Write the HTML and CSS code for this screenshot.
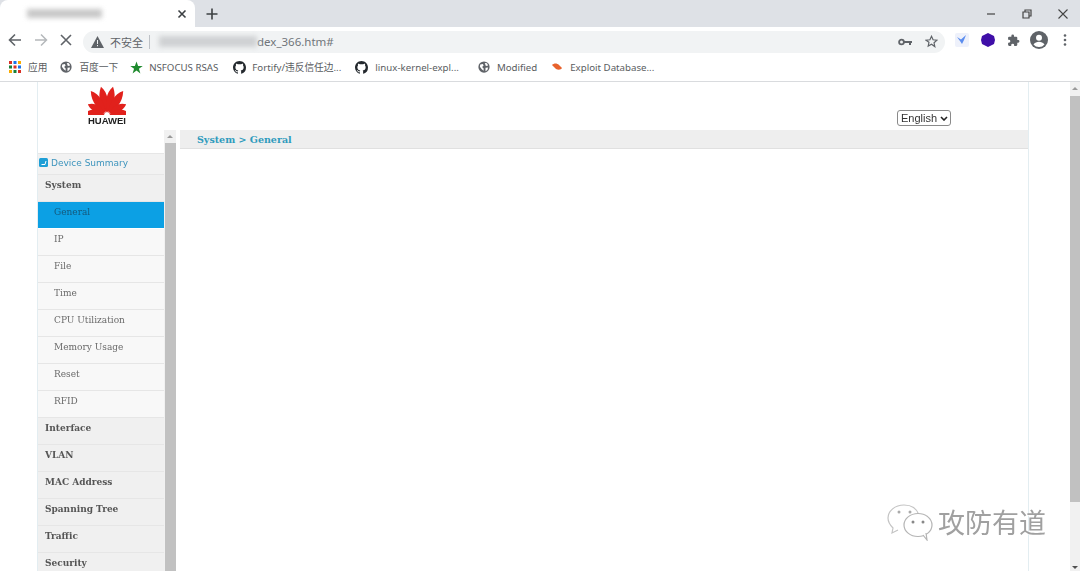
FILE: index.html
```html
<!DOCTYPE html>
<html lang="zh">
<head>
    <meta charset="UTF-8">
    <title>Huawei - System General</title>
    <link rel="stylesheet" href="styles.css">
</head>
<body>
<svg class="defs" width="0" height="0">
    <defs>
        <path id="gh" d="M8 0C3.58 0 0 3.58 0 8c0 3.54 2.29 6.53 5.47 7.59.4.07.55-.15.55-.38 0-.19-.01-.82-.01-1.49-2.01.37-2.53-.49-2.69-.94-.09-.23-.48-.94-.82-1.13-.28-.15-.68-.52-.01-.53.63-.01 1.08.58 1.23.82.72 1.21 1.87.87 2.33.66.07-.52.28-.87.51-1.07-1.78-.2-3.64-.89-3.64-3.95 0-.87.31-1.59.82-2.15-.08-.2-.36-1.02.08-2.12 0 0 .67-.21 2.2.82.64-.18 1.32-.27 2-.27.68 0 1.36.09 2 .27 1.53-1.04 2.2-.82 2.2-.82.44 1.1.16 1.92.08 2.12.51.56.82 1.27.82 2.15 0 3.07-1.87 3.75-3.65 3.95.29.25.54.73.54 1.48 0 1.07-.01 1.93-.01 2.2 0 .21.15.46.55.38A8.013 8.013 0 0016 8c0-4.42-3.58-8-8-8z"/>
        <g id="globe">
            <circle cx="8" cy="8" r="7.5" fill="#5f6368"/>
            <path d="M3 4.5l3.5-.5 1 2-2 2 2 2v3L5 11 2.5 7.5zM9 2.5l3 .5 1.5 3-3 .5zM10 9l3.5-.5-1 3.5-2.5 1.5z" fill="#fff"/>
        </g>
    </defs>
</svg>

<div class="browser">
    <!-- tab strip -->
    <div class="tabstrip">
        <div class="tab">
            <span class="blur-title"></span>
            <svg class="tab-close" width="10" height="10" viewBox="0 0 10 10"><path d="M1.5 1.5l7 7M8.5 1.5l-7 7" stroke="#3c4043" stroke-width="1.6"/></svg>
        </div>
        <svg class="new-tab" width="12" height="12" viewBox="0 0 12 12"><path d="M6 .5v11M.5 6h11" stroke="#3c4043" stroke-width="1.6"/></svg>
        <div class="win-controls">
            <svg width="12" height="12" viewBox="0 0 12 12"><path d="M2 6h8" stroke="#444" stroke-width="1.2"/></svg>
            <svg width="12" height="12" viewBox="0 0 12 12"><path d="M2 4h6v6H2zM4 4V2h6v6H8" fill="none" stroke="#444" stroke-width="1.2"/></svg>
            <svg width="12" height="12" viewBox="0 0 12 12"><path d="M1.5 1.5l9 9M10.5 1.5l-9 9" stroke="#444" stroke-width="1.1"/></svg>
        </div>
    </div>

    <!-- toolbar -->
    <div class="toolbar">
        <div class="nav-btns">
            <svg width="14" height="14" viewBox="0 0 14 14"><path d="M13 7H2M7 1.5L1.5 7 7 12.5" fill="none" stroke="#5f6368" stroke-width="1.6"/></svg>
            <svg width="14" height="14" viewBox="0 0 14 14"><path d="M1 7h11M7 1.5L12.5 7 7 12.5" fill="none" stroke="#b5b8bb" stroke-width="1.5"/></svg>
            <svg width="12" height="12" viewBox="0 0 12 12"><path d="M1 1l10 10M11 1L1 11" stroke="#5f6368" stroke-width="1.6"/></svg>
        </div>
        <div class="omnibox">
            <svg class="warn" width="13" height="12" viewBox="0 0 13 12"><path d="M6.5 0L13 12H0z" fill="#5f6368"/><path d="M6 4h1v4H6zM6 9h1v1.300H6z" fill="#f1f3f4"/></svg>
            <span class="not-secure">不安全</span>
            <span class="omni-sep"></span>
            <span class="blur-url"></span>
            <span class="url">dex_366.htm#</span>
            <svg class="key" width="14" height="8" viewBox="0 0 14 8"><circle cx="3.500" cy="4" r="2.400" fill="none" stroke="#5f6368" stroke-width="1.800"/><path d="M6 3h8v2h-1v2h-2V5H6z" fill="#5f6368"/></svg>
            <svg class="star" width="13" height="13" viewBox="0 0 24 24"><path d="M12 2.500l2.900 6.400 7 .8-5.200 4.700 1.400 6.900L12 17l-6.100 3.300 1.400-6.900L2.100 9.700l7-.8z" fill="none" stroke="#5f6368" stroke-width="2.200"/></svg>
        </div>
        <div class="ext-btns">
            <svg width="14" height="14" viewBox="0 0 14 14"><rect width="14" height="14" rx="2" fill="#eef1fb"/><path d="M2 4l4 2.500L11 2 9 7l-2 4-2-3z" fill="#5b8def"/></svg>
            <svg width="14" height="14" viewBox="0 0 14 14"><path d="M7 0l6 3 1 4-1 4-6 3-6-3-1-4 1-4z" fill="#3f0fa8"/></svg>
            <svg width="13" height="13" viewBox="0 0 24 24"><path d="M20.500 11H19V7a2 2 0 00-2-2h-4V3.500a2.500 2.500 0 00-5 0V5H4a2 2 0 00-2 2v3.800h1.500a2.700 2.700 0 010 5.400H2V20a2 2 0 002 2h3.800v-1.500a2.700 2.700 0 015.400 0V22H17a2 2 0 002-2v-4h1.500a2.500 2.500 0 000-5z" fill="#5f6368"/></svg>
            <svg class="ext-avatar" width="18" height="18" viewBox="0 0 18 18"><circle cx="9" cy="9" r="9" fill="#5f6368"/><circle cx="9" cy="6.800" r="3" fill="#fff"/><path d="M3.500 13.500c1.200-2 3.500-2.800 5.500-2.800s4.300.8 5.500 2.800A7 7 0 019 16a7 7 0 01-5.500-2.500z" fill="#fff"/></svg>
            <svg class="ext-dots" width="4" height="12" viewBox="0 0 4 12"><circle cx="2" cy="1.500" r="1.300" fill="#5f6368"/><circle cx="2" cy="6" r="1.300" fill="#5f6368"/><circle cx="2" cy="10.500" r="1.300" fill="#5f6368"/></svg>
        </div>
    </div>

    <!-- bookmarks -->
    <div class="bookmarks">
        <div class="bm bm-apps">
            <svg width="12" height="12" viewBox="0 0 12 12">
                <rect x="0" y="0" width="3" height="3" fill="#d93025"/><rect x="4.500" y="0" width="3" height="3" fill="#1a73e8"/><rect x="9" y="0" width="3" height="3" fill="#f9ab00"/>
                <rect x="0" y="4.500" width="3" height="3" fill="#188038"/><rect x="4.500" y="4.500" width="3" height="3" fill="#d93025"/><rect x="9" y="4.500" width="3" height="3" fill="#1a73e8"/>
                <rect x="0" y="9" width="3" height="3" fill="#f9ab00"/><rect x="4.500" y="9" width="3" height="3" fill="#188038"/><rect x="9" y="9" width="3" height="3" fill="#d93025"/>
            </svg>
            <span>应用</span>
        </div>
        <div class="bm"><svg width="12" height="12" viewBox="0 0 16 16"><use href="#globe"/></svg><span>百度一下</span></div>
        <div class="bm bm-star"><svg width="13" height="13" viewBox="0 0 24 24"><path d="M12 1l3 8h8.500l-7 5.300 2.700 8.700L12 17.600 4.800 23l2.700-8.700-7-5.300H9z" fill="#1f8a2e"/></svg><span>NSFOCUS RSAS</span></div>
        <div class="bm bm-tight"><svg width="13" height="13" viewBox="0 0 16 16"><use href="#gh" fill="#24292e"/></svg><span>Fortify/违反信任边...</span></div>
        <div class="bm bm-next"><svg width="13" height="13" viewBox="0 0 16 16"><use href="#gh" fill="#24292e"/></svg><span>linux-kernel-expl...</span></div>
        <div class="bm bm-wide"><svg width="12" height="12" viewBox="0 0 16 16"><use href="#globe"/></svg><span>Modified</span></div>
        <div class="bm bm-next"><svg width="12" height="12" viewBox="0 0 12 12"><path d="M1 4c2-2 5-2 7 0l3 3c-1 2-4 2-6 1z" fill="#e8622c"/></svg><span>Exploit Database...</span></div>
    </div>

    <!-- page -->
    <div class="viewport">
        <div class="page">
            <div class="frame">
                <div class="header">
                    <div class="logo">
                        <svg width="38" height="29" viewBox="-19 -29 38 29">
                            <defs>
                                <path id="petal" d="M0 -2.500C-4.500 -9 -6.500 -19 -.5 -29C5.500 -22 4.500 -10 0 -2.500z"/>
                                <path id="petal2" d="M0 -2.500C-4.500 -8 -5.500 -15 -1.500 -22C4.500 -17 4.500 -9 0 -2.500z"/>
                            </defs>
                            <g fill="#e1211c">
                                <use href="#petal" transform="rotate(-11)"/>
                                <use href="#petal" transform="rotate(11) scale(-1 1)"/>
                                <use href="#petal" transform="rotate(-33)"/>
                                <use href="#petal" transform="rotate(33) scale(-1 1)"/>
                                <use href="#petal2" transform="rotate(-57)"/>
                                <use href="#petal2" transform="rotate(57) scale(-1 1)"/>
                                <use href="#petal2" transform="rotate(-81)"/>
                                <use href="#petal2" transform="rotate(81) scale(-1 1)"/>
                            </g>
                        </svg>
                        <span class="logo-text">HUAWEI</span>
                    </div>
                    <div class="lang-wrap">
                        <select class="lang"><option>English</option></select>
                        <svg class="lang-arrow" width="8" height="5" viewBox="0 0 8 5"><path d="M1 1l3 3 3-3" fill="none" stroke="#222" stroke-width="1.600"/></svg>
                    </div>
                </div>
                <div class="content">
                    <div class="sidebar">
                        <div class="menu">
                            <div class="menu-gap"></div>
                            <div class="summary">
                                <svg class="summary-icon" width="9" height="9" viewBox="0 0 9 9"><rect width="9" height="9" rx="1.500" fill="#1f9fd6"/><path d="M2.500 6.500h3.500L7 3" fill="none" stroke="#fff" stroke-width="1"/></svg>Device Summary
                            </div>
                            <div class="item top">System</div>
                            <div class="item sub active">General</div>
                            <div class="item sub">IP</div>
                            <div class="item sub">File</div>
                            <div class="item sub">Time</div>
                            <div class="item sub">CPU Utilization</div>
                            <div class="item sub">Memory Usage</div>
                            <div class="item sub">Reset</div>
                            <div class="item sub">RFID</div>
                            <div class="item top">Interface</div>
                            <div class="item top">VLAN</div>
                            <div class="item top">MAC Address</div>
                            <div class="item top">Spanning Tree</div>
                            <div class="item top">Traffic</div>
                            <div class="item top">Security</div>
                        </div>
                        <div class="menu-scroll">
                            <div class="menu-arrow"></div>
                            <div class="menu-thumb"></div>
                        </div>
                    </div>
                    <div class="main">
                        <div class="crumb">System &gt; General</div>
                    </div>
                </div>
            </div>
        </div>
        <div class="page-scroll">
            <div class="arrow-up"></div>
            <div class="page-thumb"></div>
            <div class="arrow-down"></div>
        </div>

        <!-- watermark over the page -->
        <div class="watermark">
            <svg width="46" height="38" viewBox="0 0 46 38">
                <path d="M17 2C8 2 1 8 1 15c0 4 2 7 5 10l-1 5 6-3" fill="#fff" stroke="#c4c4c4" stroke-width="1.200"/>
                <path d="M17 2c8 0 13 4 15 10" fill="none" stroke="#c4c4c4" stroke-width="1.200"/>
                <ellipse cx="31" cy="22" rx="14" ry="11.500" fill="#fff" stroke="#b4b4b4" stroke-width="1.200"/>
                <path d="M36 32l4 5-1-7" fill="#fff" stroke="#b4b4b4" stroke-width="1.200"/>
                <circle cx="12" cy="9" r="1.500" fill="#aaa"/><circle cx="23" cy="9" r="1.500" fill="#aaa"/>
                <circle cx="26" cy="19" r="1.500" fill="#888"/><circle cx="36" cy="19" r="1.500" fill="#888"/>
            </svg>
            <span class="wm-text">攻防有道</span>
        </div>
    </div>
</div>
</body>
</html>
```

FILE: styles.css
```css
/* reset */
html, body {
    margin: 0;
    height: 100%;
    overflow: hidden;
    background-color: #fff;
}

.defs {
    display: block;
    position: absolute;
}

.browser {
    width: 1080px;
    height: 571px;
    display: flex;
    flex-direction: column;
    font-family: "Noto Sans", "Noto Sans CJK SC", sans-serif;
    filter: blur(0.45px);
}

/* --- tab strip --- */
.tabstrip {
    height: 27px;
    flex: none;
    display: flex;
    align-items: center;
    background-color: #dee1e6;
}

.tab {
    width: 195px;
    height: 27px;
    box-sizing: border-box;
    padding: 0 8px 0 27px;
    display: flex;
    align-items: center;
    justify-content: space-between;
    background-color: #fff;
    border-radius: 8px 8px 0 0;
}

.blur-title {
    width: 75px;
    height: 9px;
    background-color: #c8c8c8;
    filter: blur(2.5px);
}

.new-tab {
    margin-left: 11px;
}

.win-controls {
    margin-left: auto;
    width: 84px;
    padding-right: 11px;
    display: flex;
    justify-content: space-between;
}

/* --- toolbar --- */
.toolbar {
    height: 26px;
    flex: none;
    display: flex;
    align-items: center;
    background-color: #fff;
}

.nav-btns {
    width: 83px;
    box-sizing: border-box;
    padding: 0 11px 0 8px;
    display: flex;
    align-items: center;
    justify-content: space-between;
}

.omnibox {
    width: 862px;
    height: 22px;
    margin-top: 3px;
    box-sizing: border-box;
    padding: 0 7px 0 8px;
    display: flex;
    align-items: center;
    background-color: #f1f3f4;
    border-radius: 11px;
    color: #5f6368;
    font-size: 11px;
}

.not-secure {
    margin-left: 6px;
}

.omni-sep {
    width: 1px;
    height: 14px;
    margin: 0 9px 0 6px;
    background-color: #bdc1c6;
}

.blur-url {
    width: 98px;
    height: 11px;
    background-color: #cfd1d3;
    filter: blur(2.5px);
}

.url {
    color: #70757a;
    font-size: 11.500px;
}

.key {
    margin-left: auto;
}

.star {
    margin-left: 13px;
}

.ext-btns {
    flex: 1;
    padding-left: 10px;
    display: flex;
    align-items: center;
    gap: 12px;
}

.ext-btns .ext-avatar {
    margin-left: -2px;
}

.ext-btns .ext-dots {
    margin-left: 3px;
}

/* --- bookmarks --- */
.bookmarks {
    height: 29px;
    flex: none;
    box-sizing: border-box;
    padding-left: 9px;
    display: flex;
    align-items: center;
    gap: 13px;
    background-color: #fff;
    border-bottom: 1px solid #d9dbde;
    color: #5a5d61;
    font-size: 9.700px;
}

.bm {
    display: flex;
    align-items: center;
    gap: 7px;
    white-space: nowrap;
}

.bm-star {
    margin-left: -1px;
    gap: 6px;
}

.bm-tight {
    margin-left: 2px;
    gap: 6px;
}

.bm-next {
    margin-left: 1px;
}

.bm-wide {
    margin-left: 6px;
}

/* --- page area --- */
.viewport {
    flex: 1;
    min-height: 0;
    position: relative;
    display: flex;
    overflow: hidden;
}

.page {
    flex: 1;
    padding-left: 37px;
    padding-right: 41px;
    overflow: hidden;
}

.frame {
    height: 100%;
    display: flex;
    flex-direction: column;
    border-left: 1px solid #e3edf1;
    border-right: 1px solid #e3edf1;
}

.header {
    height: 48px;
    flex: none;
    display: flex;
    justify-content: space-between;
}

.logo {
    width: 38px;
    margin: 4px 0 0 50px;
    display: flex;
    flex-direction: column;
    align-items: center;
}

.logo-text {
    margin-top: 1px;
    color: #222;
    font-family: "Liberation Sans", sans-serif;
    font-size: 9.500px;
    font-weight: 700;
    line-height: 10px;
}

.lang-wrap {
    position: relative;
    height: 16px;
    margin: 28px 77px 0 0;
}

.lang {
    display: block;
    width: 54px;
    height: 16px;
    box-sizing: border-box;
    padding: 0 0 0 3px;
    appearance: none;
    background-color: #fff;
    border: 1px solid #8a8a8a;
    border-radius: 3px;
    color: #333;
    font-family: "Liberation Sans", sans-serif;
    font-size: 11px;
}

.lang-arrow {
    position: absolute;
    right: 3px;
    top: 6px;
}

.content {
    flex: 1;
    min-height: 0;
    display: flex;
}

.sidebar {
    width: 138px;
    flex: none;
    display: flex;
}

.menu {
    width: 126px;
    flex: none;
    overflow: hidden;
}

.menu-gap {
    height: 23px;
}

.summary {
    height: 22px;
    box-sizing: border-box;
    padding-top: 1px;
    border-top: 1px solid #e6e6e6;
    border-bottom: 1px solid #e6e6e6;
    background-color: #f2f2f2;
    color: #3d94bd;
    font-family: "DejaVu Sans", sans-serif;
    font-size: 9px;
    line-height: 17px;
    white-space: nowrap;
}

.summary-icon {
    margin: 0 3px 0 1px;
    vertical-align: -0.5px;
}

.item {
    height: 27px;
    box-sizing: border-box;
    border-bottom: 1px solid #e6e6e6;
    font-family: "DejaVu Serif", serif;
    line-height: 20px;
    white-space: nowrap;
}

.top {
    padding-left: 7px;
    background-color: #f0f0f0;
    color: #555;
    font-size: 9px;
    font-weight: 700;
}

.sub {
    padding-left: 16px;
    background-color: #f8f8f8;
    color: #6a6a6a;
    font-size: 9px;
}

.sub.active {
    background-color: #0ca0e4;
    color: #15597c;
    border-bottom-color: #fff;
}

.menu-scroll {
    flex: 1;
    display: flex;
    flex-direction: column;
    background-color: #f1f1f1;
}

.menu-arrow {
    width: 0;
    height: 0;
    margin: 5px auto 3px;
    border: 3px solid transparent;
    border-top: 0;
    border-bottom: 3px solid #9a9a9a;
}

.menu-thumb {
    flex: 1;
    margin-top: 2px;
    margin-left: 1px;
    background-color: #c1c1c1;
}

.main {
    flex: 1;
    min-width: 0;
    padding-left: 4px;
}

.crumb {
    height: 19px;
    box-sizing: border-box;
    padding-left: 17px;
    background-color: #eeeeee;
    border-bottom: 1px solid #e0e0e0;
    color: #2f9bbd;
    font-family: "DejaVu Serif", serif;
    font-size: 9.500px;
    font-weight: 700;
    line-height: 19px;
}

/* --- page scrollbar --- */
.page-scroll {
    width: 10px;
    flex: none;
    display: flex;
    flex-direction: column;
    background-color: #f1f1f1;
}

.arrow-up, .arrow-down {
    width: 0;
    height: 0;
    margin: 5px auto;
    border: 3px solid transparent;
}

.arrow-up {
    margin-bottom: 6px;
    border-top: 0;
    border-bottom: 3px solid #9a9a9a;
}

.arrow-down {
    flex: none;
    border-bottom: 0;
    border-top: 3px solid #505050;
    margin-top: 64px;
}

.page-thumb {
    flex: none;
    height: 406px;
    background-color: #c1c1c1;
}

/* --- watermark --- */
.watermark {
    position: absolute;
    left: 887px;
    top: 421px;
    display: flex;
    align-items: center;
    gap: 5px;
}

.wm-text {
    color: #a0a0a0;
    font-family: "Noto Sans CJK SC", sans-serif;
    font-size: 27px;
    line-height: 36px;
    text-shadow: 1px 1px 0 #fff;
}
```
